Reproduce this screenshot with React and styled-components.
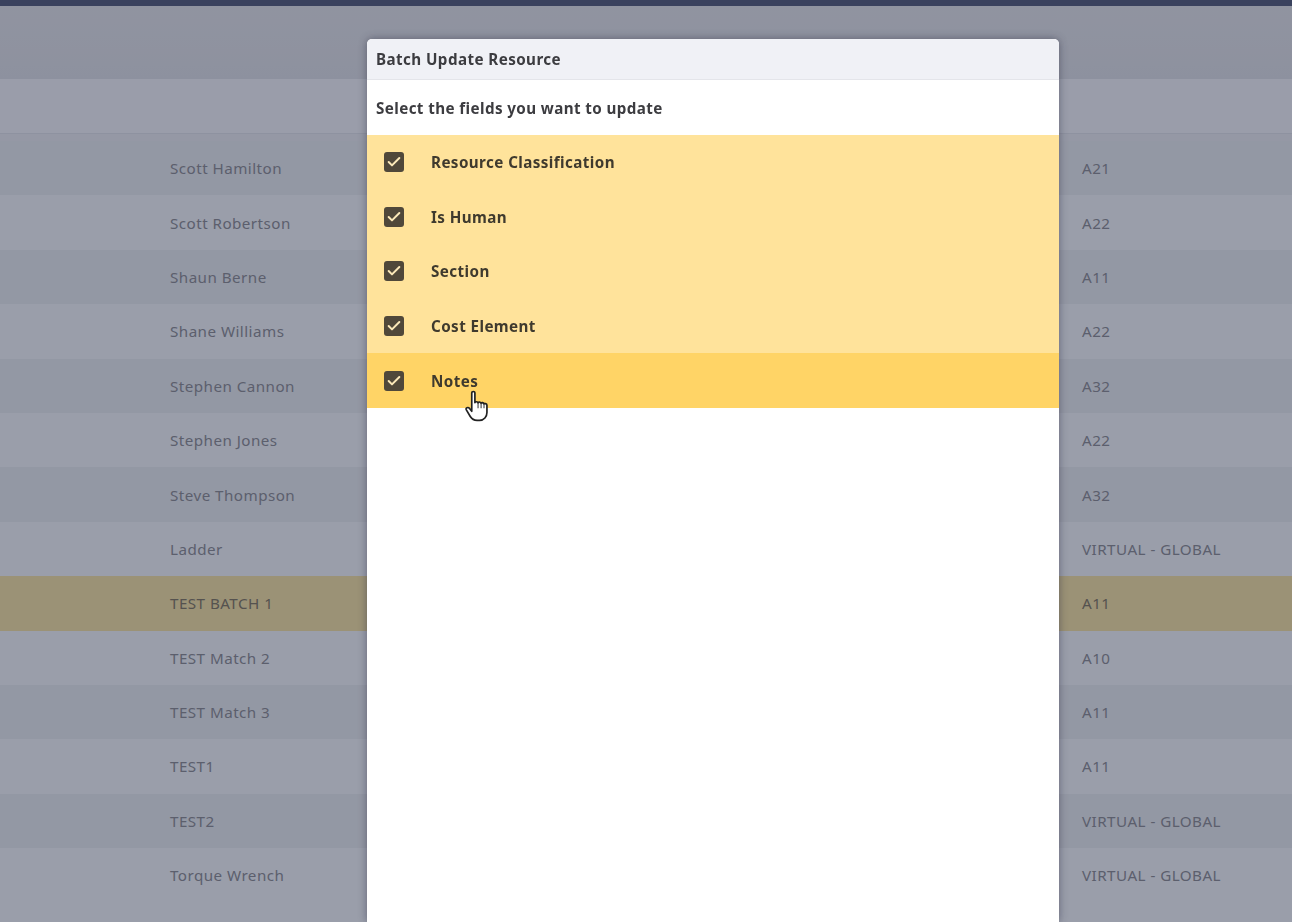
import React from 'react';
import styled, { createGlobalStyle } from 'styled-components';
import { Check } from 'lucide-react';

const GlobalStyle = createGlobalStyle`
  html, body {
    margin: 0;
    height: 100%;
    overflow: hidden;
    font-family: "Noto Sans", "Open Sans", sans-serif;
    background: #f7fbfc;
  }
  #root { height: 100%; }
`;

const Page = styled.div`
  height: 922px;
  overflow: hidden;
  display: flex;
  flex-direction: column;
  background: #f7fbfc;
`;

const TopBar = styled.div`
  height: 6px;
  flex-shrink: 0;
  background: #495572;
`;

const TitleBand = styled.div`
  height: 73px;
  flex-shrink: 0;
  background: linear-gradient(#e6e9ea, #e1e4e7);
`;

const TableHead = styled.div`
  height: 54px;
  flex-shrink: 0;
  background: #f7fafc;
  border-bottom: 1px solid #e2e5e9;
`;

const TableBody = styled.div`
  padding-top: 7px;
  background: linear-gradient(#eef1f3 7px, #f7fbfc 7px);
`;

const Row = styled.div`
  height: 54.4px;
  display: grid;
  grid-template-columns: 912px 1fr;
  align-items: center;
  padding-left: 170px;
  font-size: 15.2px;
  letter-spacing: 0.46px;
  color: ${p => (p.$selected ? '#7a7156' : '#87898c')};
  background: ${p => (p.$selected ? '#f9e59d' : p.$odd ? '#ecf0f1' : '#f7fbfc')};
`;

const Overlay = styled.div`
  position: fixed;
  inset: 0;
  display: flex;
  padding: 39px 0 0 367px;
  background: rgba(40, 45, 70, 0.45);
`;

const Modal = styled.div`
  width: 692px;
  background: #fff;
  border-radius: 5px 5px 0 0;
  overflow: hidden;
  box-shadow: 0 0 8px rgba(30, 30, 50, 0.45);
  color: #3c3c40;
`;

const ModalHeader = styled.div`
  height: 40px;
  display: flex;
  align-items: center;
  padding-left: 9px;
  background: #f0f1f6;
  border-bottom: 1px solid #e4e5ea;
  font-size: 15.2px;
  font-weight: 700;
  letter-spacing: 0.42px;
`;

const Prompt = styled.div`
  height: 55px;
  display: flex;
  align-items: center;
  padding-left: 9px;
  font-size: 15.2px;
  font-weight: 700;
  letter-spacing: 0.4px;
`;

const FieldRow = styled.div`
  height: 54.6px;
  display: flex;
  align-items: center;
  gap: 27px;
  padding-left: 17px;
  font-size: 15.2px;
  font-weight: 700;
  letter-spacing: 0.42px;
  color: #3f3a2e;
  background: ${p => (p.$hover ? '#ffd466' : '#ffe39b')};
`;

const CheckBox = styled.span`
  width: 20px;
  height: 20px;
  flex-shrink: 0;
  display: flex;
  align-items: center;
  justify-content: center;
  border-radius: 3px;
  background: #50483a;
  color: #fbe8b8;
`;

const Cursor = styled.svg`
  position: fixed;
  left: 465px;
  top: 389px;
  width: 27px;
  height: 34px;
`;

const rows = [
  ['Scott Hamilton', 'A21'],
  ['Scott Robertson', 'A22'],
  ['Shaun Berne', 'A11'],
  ['Shane Williams', 'A22'],
  ['Stephen Cannon', 'A32'],
  ['Stephen Jones', 'A22'],
  ['Steve Thompson', 'A32'],
  ['Ladder', 'VIRTUAL - GLOBAL'],
  ['TEST BATCH 1', 'A11'],
  ['TEST Match 2', 'A10'],
  ['TEST Match 3', 'A11'],
  ['TEST1', 'A11'],
  ['TEST2', 'VIRTUAL - GLOBAL'],
  ['Torque Wrench', 'VIRTUAL - GLOBAL'],
];

const fields = ['Resource Classification', 'Is Human', 'Section', 'Cost Element', 'Notes'];

export default function App() {
  return (
    <Page>
      <GlobalStyle />
      <TopBar />
      <TitleBand />
      <TableHead />
      <TableBody>
        {rows.map(([name, code], i) => (
          <Row key={name} $odd={i % 2 === 0} $selected={name === 'TEST BATCH 1'}>
            <span>{name}</span>
            <span>{code}</span>
          </Row>
        ))}
      </TableBody>
      <Overlay>
        <Modal>
          <ModalHeader>Batch Update Resource</ModalHeader>
          <Prompt>Select the fields you want to update</Prompt>
          {fields.map(field => (
            <FieldRow key={field} $hover={field === 'Notes'}>
              <CheckBox>
                <Check size={16} strokeWidth={3} />
              </CheckBox>
              {field}
            </FieldRow>
          ))}
        </Modal>
      </Overlay>
      <Cursor viewBox="0 0 24 32" preserveAspectRatio="none">
        <path
          d="M6 3.5c0-1.6 2.8-1.6 2.8 0V13c0-1.4 2.8-1.4 2.8 0.2 0-1.3 2.7-1.2 2.7 0.4 0-1.2 2.6-1 2.6 0.6 0-1 2.6-.8 2.6 1V22c0 4-2.6 7.5-6.6 7.5h-2.2c-3 0-4.6-1.2-6-3.6L1.2 19.6c-.9-1.8 1.5-3 2.7-1.4L6 21V3.5z"
          fill="#fff"
          stroke="#222"
          strokeWidth="1.5"
          strokeLinejoin="round"
        />
        <path d="M11.6 13.2V18M14.3 13.6V18M16.9 14.2V18" stroke="#333" strokeWidth="0.9" fill="none" />
      </Cursor>
    </Page>
  );
}
